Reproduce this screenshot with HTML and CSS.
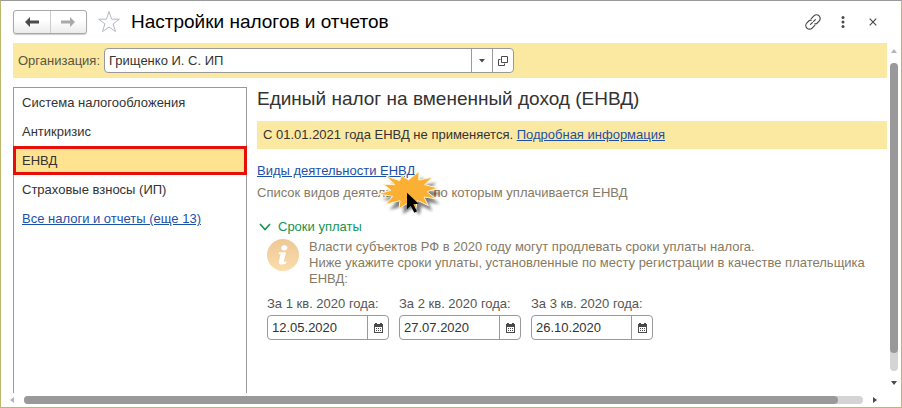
FILE: index.html
```html
<!DOCTYPE html>
<html lang="ru">
<head>
  <meta charset="UTF-8">
  <meta name="viewport" content="width=device-width, initial-scale=1.0">
  <title>Настройки налогов и отчетов</title>
  <link rel="stylesheet" href="styles.css">
</head>
<body>
  <div class="window">
    <header class="header">
      <div class="nav-buttons">
        <button type="button" aria-label="Назад">
          <svg width="14" height="10" viewBox="0 0 14 10"><path d="M0 5L5 0V3.5H14V6.5H5V10Z" fill="#4a4a4a"/></svg>
        </button>
        <button type="button" aria-label="Вперед">
          <svg width="14" height="10" viewBox="0 0 14 10"><path d="M14 5L9 0V3.5H0V6.5H9V10Z" fill="#a9a9a9"/></svg>
        </button>
      </div>
      <button type="button" class="icon-button star" aria-label="В избранное">
        <svg width="24" height="24" viewBox="0 0 24 24"><path d="M12 1.5L14.6 9.2H22.4L16.1 13.9L18.5 21.6L12 17L5.5 21.6L7.9 13.9L1.6 9.2H9.4Z" fill="#fff" stroke="#b3b9c0"/></svg>
      </button>
      <h1>Настройки налогов и отчетов</h1>
      <div class="header-tools">
        <button type="button" class="icon-button" aria-label="Ссылка">
          <svg width="16" height="16" viewBox="0 0 16 16" fill="none" stroke="#4a4a4a" stroke-width="1.2" stroke-linecap="round"><path d="M6.2 4.6L8.9 1.9A3.1 3.1 0 0 1 14.1 7.1L12 9.2Q11 10 9.8 9.9M9.8 11.4L7.1 14.1A3.1 3.1 0 0 1 1.9 8.9L4 6.8Q5 6 6.2 6.1M5.6 10.4L7.4 8.6M8.6 7.4L10.4 5.6"/></svg>
        </button>
        <button type="button" class="icon-button" aria-label="Еще">
          <svg width="16" height="16" viewBox="0 0 16 16" fill="#4a4a4a"><circle cx="8" cy="3.600" r="1.5"/><circle cx="8" cy="8" r="1.5"/><circle cx="8" cy="12.400" r="1.5"/></svg>
        </button>
        <button type="button" class="icon-button" aria-label="Закрыть">
          <svg width="16" height="16" viewBox="0 0 16 16" stroke="#4a4a4a" stroke-width="1.2"><path d="M4.700 4.700L11.300 11.300M11.300 4.700L4.700 11.300"/></svg>
        </button>
      </div>
    </header>

    <div class="workspace">
      <main class="page">
        <div class="organization">
          <label for="organization">Организация:</label>
          <div class="field field-wide">
            <input type="text" id="organization" value="Грищенко И. С. ИП">
            <button type="button" aria-label="Выбрать">
              <svg width="6" height="4" viewBox="0 0 6 4"><path d="M0 0H6L3 3.500Z" fill="#4a4a4a"/></svg>
            </button>
            <button type="button" aria-label="Открыть">
              <svg width="10" height="10" viewBox="0 0 10 10" fill="none" stroke="#4a4a4a"><path d="M3.5 0.5H9.5V6.5H3.5ZM2.500 3.500H0.5V9.500H6.500V7.500"/></svg>
            </button>
          </div>
        </div>

        <div class="columns">
          <nav class="sections">
            <a href="#system" class="section">Система налогообложения</a>
            <a href="#anticrisis" class="section">Антикризис</a>
            <a href="#envd" class="section active">ЕНВД</a>
            <a href="#insurance" class="section">Страховые взносы (ИП)</a>
            <a href="#all" class="section all">Все налоги и отчеты (еще 13)</a>
          </nav>

          <section class="content">
            <h2>Единый налог на вмененный доход (ЕНВД)</h2>
            <p class="banner">С 01.01.2021 года ЕНВД не применяется. <a href="#info">Подробная информация</a></p>

            <div class="activities">
              <a href="#activities">Виды деятельности ЕНВД</a>
              <p class="hint">Список видов деятельности, по которым уплачивается ЕНВД</p>
              <svg class="click-mark" width="65" height="54" viewBox="384 100 195 162">
                <defs>
                  <filter id="shadow" x="-20%" y="-20%" width="150%" height="150%">
                    <feGaussianBlur stdDeviation="5"/>
                  </filter>
                </defs>
                <path transform="translate(12 16)" filter="url(#shadow)" fill="#000" opacity="0.5" d="M510 111L509 136L550 128L527 150L567 160L534 171L560 192L525 187L538 213L505 197L500 225L480 203L450 222L453 198L410 209L431 185L387 178L426 167L403 149L437 150L412 124L452 138L458 122L478 136Z"/>
                <path fill="#fbb034" stroke="#fff3d0" stroke-width="3" d="M510 111L509 136L550 128L527 150L567 160L534 171L560 192L525 187L538 213L505 197L500 225L480 203L450 222L453 198L410 209L431 185L387 178L426 167L403 149L437 150L412 124L452 138L458 122L478 136Z"/>
                <path fill="#000" d="M474 174V224L485 213L496 234L504 230L493 209L509 207Z"/>
              </svg>
            </div>

            <details class="terms" open>
              <summary>
                <svg width="12" height="8" viewBox="0 0 12 8" fill="none" stroke="#159452" stroke-width="1.6"><path d="M1 1L6 6.500L11 1"/></svg>
                Сроки уплаты
              </summary>
              <div class="note">
                <svg width="32" height="32" viewBox="0 0 32 32">
                  <defs>
                    <linearGradient id="info" x1="0" y1="0" x2="0" y2="1">
                      <stop offset="0" stop-color="#edc896"/>
                      <stop offset="1" stop-color="#fbdcab"/>
                    </linearGradient>
                  </defs>
                  <circle cx="16" cy="16" r="16" fill="url(#info)"/>
                  <ellipse cx="17.300" cy="8.800" rx="3" ry="2.600" fill="#fff"/>
                  <path fill="#fff" d="M12 13.200H19L16.800 22.400Q16.600 23.400 19.500 22.500L19.200 24.200Q16.500 26 13.500 25.500Q11.200 25 11.900 22.500L13.600 15.300L11.600 14.900Z"/>
                </svg>
                <p>Власти субъектов РФ в 2020 году могут продлевать сроки уплаты налога.<br>
                Ниже укажите сроки уплаты, установленные по месту регистрации в качестве плательщика ЕНВД:</p>
              </div>
              <div class="dates">
                <div class="date">
                  <label for="quarter1">За 1 кв. 2020 года:</label>
                  <div class="field">
                    <input type="text" id="quarter1" value="12.05.2020">
                    <button type="button" aria-label="Календарь"><svg width="9" height="10" viewBox="0 0 9 10"><use href="#calendar"/></svg></button>
                  </div>
                </div>
                <div class="date">
                  <label for="quarter2">За 2 кв. 2020 года:</label>
                  <div class="field">
                    <input type="text" id="quarter2" value="27.07.2020">
                    <button type="button" aria-label="Календарь"><svg width="9" height="10" viewBox="0 0 9 10"><use href="#calendar"/></svg></button>
                  </div>
                </div>
                <div class="date">
                  <label for="quarter3">За 3 кв. 2020 года:</label>
                  <div class="field">
                    <input type="text" id="quarter3" value="26.10.2020">
                    <button type="button" aria-label="Календарь"><svg width="9" height="10" viewBox="0 0 9 10"><use href="#calendar"/></svg></button>
                  </div>
                </div>
              </div>
            </details>
          </section>
        </div>
      </main>

      <div class="scrollbar vertical">
        <svg width="6" height="4" viewBox="0 0 6 4"><path d="M0 4H6L3 0Z" fill="#b5b5b5"/></svg>
        <div class="track"><div class="thumb"></div></div>
        <svg width="6" height="4" viewBox="0 0 6 4"><path d="M0 0H6L3 4Z" fill="#4a4a4a"/></svg>
      </div>
      <div class="scrollbar horizontal">
        <svg width="4" height="6" viewBox="0 0 4 6"><path d="M4 0V6L0 3Z" fill="#b5b5b5"/></svg>
        <div class="track"><div class="thumb"></div></div>
        <svg width="4" height="6" viewBox="0 0 4 6"><path d="M0 0V6L4 3Z" fill="#4a4a4a"/></svg>
      </div>
    </div>
  </div>

  <svg class="symbols" width="0" height="0" aria-hidden="true">
    <symbol id="calendar" viewBox="0 0 9 10">
      <path fill="#4a4a4a" fill-rule="evenodd" d="M0 1H1V0H3V1H6V0H8V1H9V10H0ZM1 4V9H8V4Z"/>
      <path fill="#4a4a4a" d="M2 5H3V6H2ZM4 5H5V6H4ZM6 5H7V6H6ZM2 7H3V8H2ZM4 7H5V8H4ZM6 7H7V8H6Z"/>
    </symbol>
  </svg>
</body>
</html>
```
FILE: styles.css
```css
* {
  box-sizing: border-box;
}

body {
  margin: 0;
  font-family: "Liberation Sans", Arial, sans-serif;
  font-size: 13px;
  line-height: 16px;
  color: #333;
  background: #fff;
}

h1, h2, p {
  margin: 0;
  font-weight: normal;
}

a {
  color: #1d50a8;
}

button {
  display: flex;
  align-items: center;
  justify-content: center;
  padding: 0;
  border: none;
  background: none;
  cursor: pointer;
}

.window {
  display: flex;
  flex-direction: column;
  min-height: 100vh;
  border: 1px solid #bdb76b;
  border-top-color: #999;
}

/* Header */

.header {
  display: flex;
  align-items: center;
  height: 42px;
  padding: 0 20px 0 12px;
}

.nav-buttons {
  display: flex;
  width: 74px;
  height: 24px;
  border: 1px solid #a8a8a8;
  border-radius: 3px;
  background: linear-gradient(#fff 40%, #ececec);
  box-shadow: 0 1px 1px #ccc;
}

.nav-buttons button {
  flex: 1;
}

.nav-buttons button + button {
  border-left: 1px solid #ccc;
}

.star {
  margin: 0 10px;
}

h1 {
  font-size: 19px;
  line-height: 24px;
  color: #000;
}

.header-tools {
  display: flex;
  gap: 14px;
  margin-left: auto;
}

/* Page */

.workspace {
  flex: 1;
  display: grid;
  grid-template-columns: 1fr 14px;
  grid-template-rows: 1fr 14px;
}

.page {
  display: flex;
  flex-direction: column;
  padding-left: 12px;
}

.organization {
  display: flex;
  align-items: center;
  gap: 4px;
  height: 35px;
  padding: 0 5px;
  background: #fbe9a2;
}

.organization label {
  color: #5a5440;
}

.field {
  display: flex;
  width: 122px;
  height: 25px;
  border: 1px solid #999;
  border-radius: 4px;
  background: #fff;
}

.field-wide {
  width: 410px;
}

.field input {
  flex: 1;
  min-width: 0;
  padding: 0 4px;
  border: none;
  outline: none;
  background: none;
  font: inherit;
  color: #333;
}

.field button {
  width: 21px;
  border-left: 1px solid #999;
}

.columns {
  flex: 1;
  display: flex;
  gap: 10px;
  padding-top: 9px;
}

.sections {
  display: flex;
  flex-direction: column;
  flex: 0 0 234px;
  border: 1px solid #999;
  border-bottom: none;
}

.section {
  height: 29px;
  padding: 7px 8px;
  color: #333;
  text-decoration: none;
}

.section.active {
  margin: 0 -1px;
  padding: 4px 6px;
  border: 3px solid #e60f0a;
  background: #ffe391;
}

.section.all {
  color: #1d50a8;
  text-decoration: underline;
}

/* Content */

.content {
  flex: 1;
  min-width: 0;
}

h2 {
  font-size: 19px;
  line-height: 24px;
}

.banner {
  margin-top: 10px;
  padding: 6px;
  background: #fbe9a2;
}

.activities {
  position: relative;
  margin-top: 14px;
}

.hint {
  margin-top: 6px;
  color: #857a64;
}

.click-mark {
  position: absolute;
  left: 120px;
  top: 5px;
}

.terms {
  margin-top: 18px;
}

.terms summary {
  display: flex;
  align-items: center;
  gap: 7px;
  padding-left: 2px;
  list-style: none;
  color: #159452;
  cursor: pointer;
}

.note {
  display: flex;
  gap: 10px;
  margin: 4px 0 0 10px;
  color: #857a64;
}

.note svg {
  flex: none;
}

.dates {
  display: flex;
  gap: 10px;
  margin: 9px 0 0 10px;
}

.date label {
  display: block;
  margin-bottom: 3px;
  color: #555;
}

/* Scrollbars */

.scrollbar {
  display: flex;
  align-items: center;
}

.vertical {
  flex-direction: column;
  gap: 10px;
  padding: 6px 0 8px;
}

.horizontal {
  gap: 10px;
  padding: 0 10px 0 9px;
}

.track {
  flex: 1;
  border-radius: 4px;
  background: #d4d4d4;
}

.thumb {
  border-radius: 4px;
  background: #999;
}

.vertical .track {
  width: 8px;
}

.vertical .thumb {
  height: 94%;
}

.horizontal .track {
  height: 8px;
}

.horizontal .thumb {
  width: 97%;
  height: 8px;
}

.symbols {
  position: absolute;
}
```
